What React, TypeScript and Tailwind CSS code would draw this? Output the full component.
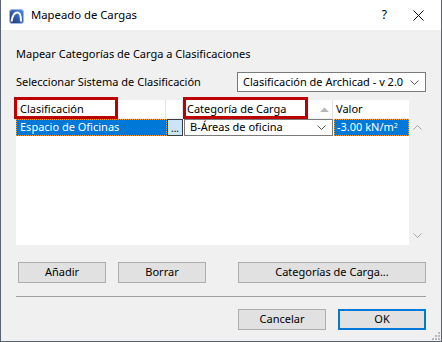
import React from "react";

const font = { fontFamily: '"Noto Sans", "Open Sans", sans-serif' };

function AppIcon() {
  return (
    <svg width="15" height="15" viewBox="0 0 15 15">
      <defs>
        <linearGradient id="ai" x1="0" y1="1" x2="1" y2="0">
          <stop offset="0" stopColor="#1c2f7a" />
          <stop offset="1" stopColor="#4f8fe6" />
        </linearGradient>
      </defs>
      <rect x="0.5" y="0.5" width="14" height="14" rx="2.5" fill="url(#ai)" stroke="#9fb6de" />
      <path d="M2.5 12.5 C3.5 6 6 3.5 8.5 3.5 C11 3.5 12 6.5 12 12.5" fill="none" stroke="#fff" strokeWidth="2" />
    </svg>
  );
}

function Chevron({ up = false, color = "#555" }: { up?: boolean; color?: string }) {
  return (
    <svg width="9" height="5" viewBox="0 0 9 5">
      <path d={up ? "M0.5 4.5 L4.5 0.5 L8.5 4.5" : "M0.5 0.5 L4.5 4.5 L8.5 0.5"} fill="none" stroke={color} strokeWidth="1" />
    </svg>
  );
}

function Btn({ label, className = "", primary = false }: { label: string; className?: string; primary?: boolean }) {
  return (
    <div
      className={
        "h-[21px] flex items-center justify-center bg-[#e1e1e1] text-black " +
        (primary ? "border-2 border-[#0078d7] " : "border border-[#adadad] ") +
        className
      }
    >
      {label}
    </div>
  );
}

export default function App() {
  return (
    <div style={font} className="relative w-[442px] h-[342px] bg-[#f0f0f0] border border-t-0 border-[#5a6470] flex flex-col text-[11px] text-black overflow-hidden whitespace-nowrap">
      {/* title bar */}
      <div className="h-[30px] bg-white flex items-center shrink-0">
        <div className="ml-[8px] mt-[2px]">
          <AppIcon />
        </div>
        <span className="ml-[7px] text-[11.3px]">Mapeado de Cargas</span>
        <span className="ml-auto mr-[26px] text-[12px]">?</span>
        <svg width="11" height="11" viewBox="0 0 11 11" className="mr-[17px]">
          <path d="M0.5 0.5 L10.5 10.5 M10.5 0.5 L0.5 10.5" stroke="#111" strokeWidth="1" />
        </svg>
      </div>

      <div className="px-[15px] flex flex-col">
        <div className="mt-[16px] leading-[16px]">Mapear Categorías de Carga a Clasificaciones</div>

        <div className="mt-[10px] flex items-center justify-between h-[20px]">
          <span>Seleccionar Sistema de Clasificación</span>
          <div className="w-[189px] h-[20px] bg-white border border-[#7a7a7a] flex items-center pl-[5px] pr-[6px]">
            <span>Clasificación de Archicad - v 2.0</span>
            <span className="ml-auto flex">
              <Chevron />
            </span>
          </div>
        </div>

        {/* table */}
        <div className="relative mt-[8px] flex h-[145px]">
          <div className="w-[393px] bg-white flex flex-col">
            <div className="h-[19px] flex items-center border-b border-[#f0f0f0]">
              <div className="w-[150px] h-full flex items-center pl-[4px] border-r border-[#e5e5e5]">Clasificación</div>
              <div className="w-[17px] h-full border-r border-[#e5e5e5]" />
              <div className="w-[150px] h-full flex items-center pl-[4px] border-r border-[#e5e5e5]">
                <span>Categoría de Carga</span>
                <svg width="9" height="5" viewBox="0 0 9 5" className="ml-auto mr-[3px]">
                  <path d="M0 5 L4.5 0.5 L9 5 Z" fill="#b8b8b8" />
                </svg>
              </div>
              <div className="flex-1 h-full flex items-center pl-[3px]">Valor</div>
            </div>
            <div className="h-[17px] flex">
              <div className="w-[151px] h-full bg-[#0078d7] text-white border border-dotted border-[#f29a3a] flex items-center pl-[3px]">
                Espacio de Oficinas
              </div>
              <div className="w-[16px] h-full bg-[#cce4f7] border border-[#3c3c3c] flex items-end justify-center leading-[13px] text-[10px]">
                ...
              </div>
              <div className="w-[149px] ml-[1px] h-full bg-white border border-[#7a7a7a] flex items-center pl-[5px] pr-[6px]">
                <span>B-Áreas de oficina</span>
                <span className="ml-auto flex">
                  <Chevron />
                </span>
              </div>
              <div className="flex-1 ml-[1px] h-full bg-[#0078d7] text-white border border-dotted border-[#f29a3a] flex items-center pl-[2px]">
                <span>-3.00 kN/m</span>
                <span className="text-[7px] leading-[7px] self-start mt-[2px]">2</span>
              </div>
            </div>
          </div>
          <div className="w-[16px] flex flex-col items-center justify-between pt-[25px] pb-[7px]">
            <Chevron up color="#a6a6a6" />
            <Chevron color="#a6a6a6" />
          </div>

          {/* highlight annotations */}
          <div className="absolute left-[-2px] top-[-3px] w-[104px] h-[22px] border-[3px] border-[#bd0000]" />
          <div className="absolute left-[167px] top-[-3px] w-[125px] h-[22px] border-[3px] border-[#bd0000]" />
        </div>

        <div className="mt-[17px] flex">
          <Btn label="Añadir" className="w-[88px] ml-[2px]" />
          <Btn label="Borrar" className="w-[88px] ml-[12px]" />
          <Btn label="Categorías de Carga..." className="w-[188px] ml-auto" />
        </div>

        <div className="mt-[13px] h-px bg-[#a0a0a0]" />

        <div className="mt-[12px] flex justify-end gap-[12px]">
          <Btn label="Cancelar" className="w-[88px]" />
          <Btn label="OK" className="w-[88px]" primary />
        </div>
      </div>

      {/* resize grip */}
      <svg width="8" height="8" viewBox="0 0 8 8" className="absolute right-[1px] bottom-[1px]">
        <rect x="6" y="0" width="2" height="2" fill="#b8b8b8" />
        <rect x="3" y="3" width="2" height="2" fill="#b8b8b8" />
        <rect x="6" y="3" width="2" height="2" fill="#b8b8b8" />
        <rect x="0" y="6" width="2" height="2" fill="#b8b8b8" />
        <rect x="3" y="6" width="2" height="2" fill="#b8b8b8" />
        <rect x="6" y="6" width="2" height="2" fill="#b8b8b8" />
      </svg>
    </div>
  );
}
